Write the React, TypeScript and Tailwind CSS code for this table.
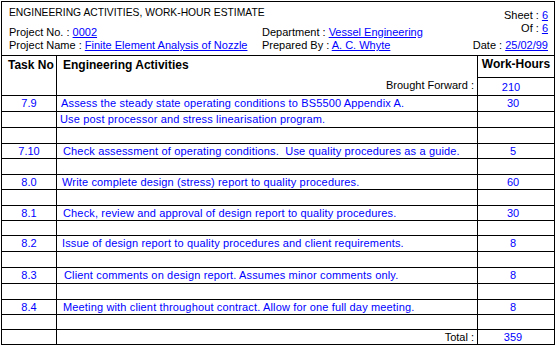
import React from "react";

interface Row {
  task?: string;
  text?: string;
  hours?: string;
  h: string;
  indent?: string;
  total?: boolean;
}

const rows: Row[] = [
  { task: "7.9", text: "Assess the steady state operating conditions to BS5500 Appendix A.", hours: "30", h: "h-[16px]", indent: "pl-[4px]" },
  { text: "Use post processor and stress linearisation program.", h: "h-[16px]", indent: "pl-[3px]" },
  { h: "h-[16px]" },
  { task: "7.10", text: "Check assessment of operating conditions.  Use quality procedures as a guide.", hours: "5", h: "h-[15px]", indent: "pl-[6px]" },
  { h: "h-[16px]" },
  { task: "8.0", text: "Write complete design (stress) report to quality procedures.", hours: "60", h: "h-[15px]", indent: "pl-[5px]" },
  { h: "h-[16px]" },
  { task: "8.1", text: "Check, review and approval of design report to quality procedures.", hours: "30", h: "h-[15px]", indent: "pl-[6px]" },
  { h: "h-[15px]" },
  { task: "8.2", text: "Issue of design report to quality procedures and client requirements.", hours: "8", h: "h-[16px]", indent: "pl-[5px]" },
  { h: "h-[16px]" },
  { task: "8.3", text: "Client comments on design report. Assumes minor comments only.", hours: "8", h: "h-[16px]", indent: "pl-[7px]" },
  { h: "h-[16px]" },
  { task: "8.4", text: "Meeting with client throughout contract. Allow for one full day meeting.", hours: "8", h: "h-[15px]", indent: "pl-[6px]" },
  { h: "h-[15px]" },
  { hours: "359", h: "h-[14px]", total: true },
];

function Link({ children }: { children: React.ReactNode }) {
  return <span className="text-[#0000ff] underline underline-offset-1">{children}</span>;
}

export default function App() {
  return (
    <div className="bg-white w-[556px] h-[346px] pl-px pt-px font-['Liberation_Sans',Arial,sans-serif] text-[11px] leading-[13px] text-black">
      <div className="w-[554px] h-[344px] border border-black flex flex-col">
        {/* Header block */}
        <div className="h-[54px] border-b border-black flex items-end pb-[3px] pl-[7px] pr-[6px]">
          <div className="w-[253px] flex flex-col">
            <div className="h-[13px] whitespace-nowrap text-[10.3px] mb-[7px]">ENGINEERING ACTIVITIES, WORK-HOUR ESTIMATE</div>
            <div className="h-[13px] whitespace-nowrap">Project No. : <Link>0002</Link></div>
            <div className="h-[13px] whitespace-nowrap">Project Name : <Link>Finite Element Analysis of Nozzle</Link></div>
          </div>
          <div className="flex-1 flex flex-col">
            <div className="h-[13px] whitespace-nowrap">Department : <Link>Vessel Engineering</Link></div>
            <div className="h-[13px] whitespace-nowrap">Prepared By : <Link>A. C. Whyte</Link></div>
          </div>
          <div className="flex flex-col items-end">
            <div className="h-[13px] whitespace-nowrap">Sheet : <Link>6</Link></div>
            <div className="h-[13px] whitespace-nowrap mb-[4px]">Of : <Link>6</Link></div>
            <div className="h-[13px] whitespace-nowrap">Date : <Link>25/02/99</Link></div>
          </div>
        </div>

        {/* Column headings */}
        <div className="h-[40px] border-b border-black flex">
          <div className="w-[55px] border-r border-black font-bold text-[12px] pl-[6px] pt-[3px] whitespace-nowrap">Task No</div>
          <div className="flex-1 border-r border-black flex flex-col justify-between pl-[6px] pr-[3px] pt-[3px] pb-[3px]">
            <div className="font-bold text-[12px]">Engineering Activities</div>
            <div className="text-right">Brought Forward :</div>
          </div>
          <div className="w-[76px] flex flex-col">
            <div className="h-[22px] border-b border-black font-bold text-[12px] text-center pt-[2px]">Work-Hours</div>
            <div className="flex-1 flex items-center justify-center pr-[10px] pt-[2px] text-[#0000ff]">210</div>
          </div>
        </div>

        {/* Activity rows */}
        {rows.map((r, i) => (
          <div key={i} className={`${r.h} flex ${r.total ? "" : "border-b border-black"}`}>
            <div className="w-[55px] border-r border-black flex items-center justify-center text-[#0000ff]">{r.task}</div>
            <div className={`flex-1 border-r border-black flex items-center whitespace-pre ${r.total ? "justify-end pr-[3px]" : `text-[#0000ff] tracking-[0.15px] ${r.indent ?? ""}`}`}>
              {r.total ? "Total :" : r.text}
            </div>
            <div className="w-[76px] flex items-center justify-center pr-[6px] text-[#0000ff]">{r.hours}</div>
          </div>
        ))}
      </div>
    </div>
  );
}
